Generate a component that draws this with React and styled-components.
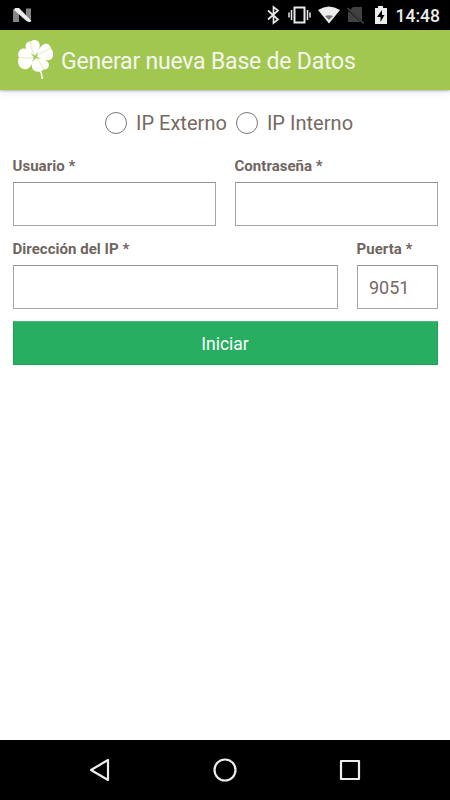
import React from "react";
import styled, { createGlobalStyle } from "styled-components";

const GlobalStyle = createGlobalStyle`
  * { box-sizing: border-box; }
  body { margin: 0; background: #fff; font-family: Roboto, "Liberation Sans", sans-serif; }
`;

const Screen = styled.div`
  display: flex;
  flex-direction: column;
  width: 450px;
  height: 800px;
  background: #fff;
`;

const StatusBar = styled.header`
  display: flex;
  align-items: center;
  justify-content: space-between;
  height: 30px;
  padding: 0 10px 0 13px;
  background: #000;
`;

const StatusIcons = styled.div`
  display: flex;
  align-items: center;
`;

const Clock = styled.span`
  margin: 2px 0 0 8px;
  color: #ebebeb;
  font-size: 17.5px;
  font-weight: 500;
  line-height: 30px;
`;

const AppBar = styled.div`
  display: flex;
  align-items: center;
  height: 60px;
  padding-left: 17px;
  background: #a2c751;
  box-shadow: 0 1px 2px rgba(0, 0, 0, 0.25), 0 3px 7px rgba(0, 0, 0, 0.08);
`;

const Title = styled.h1`
  margin: 4px 0 0 7px;
  color: #f4f6ef;
  font-size: 23px;
  font-weight: 400;
  letter-spacing: -0.2px;
  line-height: 30px;
  white-space: nowrap;
`;

const Form = styled.main`
  flex: 1;
  display: flex;
  flex-direction: column;
  padding: 19px 12.5px 0;
`;

const RadioGroup = styled.div`
  display: flex;
  justify-content: center;
  gap: 9px;
  height: 27px;
  margin-left: 8px;
`;

const Radio = styled.label`
  display: flex;
  align-items: center;
  gap: 9px;
  color: #746962;
  font-size: 20px;
  letter-spacing: 0.03px;
  line-height: 27px;
  white-space: nowrap;
`;

const RadioText = styled.span`
  padding-top: 2px;
`;

const RadioCircle = styled.span`
  width: 22px;
  height: 22px;
  border: 1px solid #7b7775;
  border-radius: 50%;
`;

const FieldRow = styled.div`
  display: grid;
  grid-template-columns: ${(p) => p.$columns};
  column-gap: 19px;
  margin-top: ${(p) => p.$top}px;
`;

const Field = styled.label`
  display: flex;
  flex-direction: column;
  min-width: 0;
`;

const Label = styled.span`
  height: 20px;
  margin-bottom: 6px;
  color: #70655f;
  font-size: 15px;
  font-weight: 700;
  letter-spacing: 0.03px;
  line-height: 20px;
  white-space: nowrap;
`;

const Input = styled.input`
  width: 100%;
  height: 44px;
  padding: 1px 0 0 11.5px;
  border: 1px solid #aaa5a5;
  border-top-color: #969191;
  border-radius: 0;
  background: #fff;
  color: #746962;
  font: 400 18px Roboto, sans-serif;
  outline: none;
`;

const SubmitButton = styled.button`
  height: 44px;
  margin-top: 12px;
  padding: 2px 0 0;
  border: 1px solid #18a452;
  border-top-color: #52b77b;
  background: #28ae61;
  color: #fff;
  font: 400 17.5px Roboto, sans-serif;
`;

const NavBar = styled.nav`
  display: flex;
  justify-content: center;
  align-items: center;
  gap: 97px;
  height: 60px;
  background: #000;
`;

function Clover() {
  return (
    <svg width="37" height="42" viewBox="17 39 37 42" fill="#fff">
      <path d="M34.800 56C29 54 25 50 25.500 45.500C26 42.500 28.500 41.200 30.500 41.500C33 39 38 39.500 39 42.500C41 46 39 51 34.800 56Z" />
      <path d="M36 56.500C37 52 40 46 44 44.200C47.500 43 50.500 45 50.800 48.500C53.500 51 53.800 55 52 58.500C49.500 61.500 42 60.500 36 56.500Z" />
      <path d="M35.800 57.300C42 58.500 48.500 60.500 49 64.500C49.200 68 46 70 43.500 69.500C41 72.500 35.500 72.500 33 69.500C30.500 66 32.500 61 35.800 57.300Z" />
      <path d="M34.800 57C33.500 62 31 67.500 27 69C23 70 19 67.500 18.500 63.500C17.500 61.500 18.200 59 19 57.500C17.200 54.500 18.500 50 22 48.700C27 47.500 32 52 34.800 57Z" />
      <path d="M38.500 69Q42.300 73 42.200 79" fill="none" stroke="#fff" strokeWidth="1.6" />
      <path d="M30.500 42Q30.500 49 34.800 55.500M50 48.500Q43 52 36.600 56M43.500 69Q41 63 36 57.800M19 57.500Q27 59 34.400 57.300" fill="none" stroke="#a2c751" strokeWidth=".35" />
      <path d="M30.500 53L35 55.700L38.500 52L36.600 56.500L41 59.300L36 58L32 62L34 57.500Z" fill="#a2c751" />
    </svg>
  );
}

function NougatIcon() {
  return (
    <svg width="20" height="16" viewBox="13 7 20 16">
      <path d="M13 9l6 4v9h-6zM26 8.500h5v13l-5-4z" fill="#858585" />
      <path d="M15 8h4l12.500 13q-2 2-5 0L14 10z" fill="#ededed" />
    </svg>
  );
}

function SystemIcons() {
  return (
    <svg width="122" height="24" viewBox="266 3 122 24" fill="none" stroke="#e8e8e8">
      <path d="M268 10.500l10 9-4.500 3.500V7l4.500 3.500-10 9" strokeWidth="1.7" />
      <path d="M294.500 7.500h10v15h-10z" strokeWidth="2" />
      <path d="M291.500 10v10M289 12.500v5M307.500 10v10M310 12.500v5" strokeWidth="1.5" />
      <path d="M318 10q11-7 22 0L329 23.500z" fill="#ededed" stroke="none" />
      <path d="M325 16q4-1.500 8 0l-4 4z" fill="#777" stroke="none" />
      <path d="M348 12l5-5h9v15h-14z" fill="#414141" stroke="none" />
      <path d="M348 9l16 15" stroke="#000" strokeWidth="2" />
      <path d="M347.500 8l16 15.500" stroke="#4b4b4b" strokeWidth="1.3" />
      <path d="M375 8h3V6h5v2h4v16h-12z" fill="#ededed" stroke="none" />
      <path d="M382 10l-5 7h3.500v5l4-7H382z" fill="#000" stroke="none" />
    </svg>
  );
}

const NavIcon = styled.svg`
  width: 28px;
  height: 28px;
  fill: none;
  stroke: #ededed;
  stroke-width: 2.2;
  stroke-linejoin: round;
`;

function RadioOption({ children }) {
  return <Radio><RadioCircle /><RadioText>{children}</RadioText></Radio>;
}

function TextField({ label, value = "" }) {
  return (
    <Field>
      <Label>{label}</Label>
      <Input defaultValue={value} />
    </Field>
  );
}

export default function App() {
  return (
    <>
      <GlobalStyle />
      <Screen>
        <StatusBar>
          <NougatIcon />
          <StatusIcons>
            <SystemIcons />
            <Clock>14:48</Clock>
          </StatusIcons>
        </StatusBar>
        <AppBar>
          <Clover />
          <Title>Generar nueva Base de Datos</Title>
        </AppBar>
        <Form>
          <RadioGroup>
            <RadioOption>IP Externo</RadioOption>
            <RadioOption>IP Interno</RadioOption>
          </RadioGroup>
          <FieldRow $columns="1fr 1fr" $top={20}>
            <TextField label="Usuario *" />
            <TextField label="Contraseña *" />
          </FieldRow>
          <FieldRow $columns="1fr 81px" $top={13}>
            <TextField label="Dirección del IP *" />
            <TextField label="Puerta *" value="9051" />
          </FieldRow>
          <SubmitButton>Iniciar</SubmitButton>
        </Form>
        <NavBar>
          <NavIcon viewBox="0 0 28 28"><path d="M5 14L22 4v20z" /></NavIcon>
          <NavIcon viewBox="0 0 28 28"><circle cx="14" cy="14" r="10.500" /></NavIcon>
          <NavIcon viewBox="0 0 28 28"><path d="M5 5h18v18H5z" /></NavIcon>
        </NavBar>
      </Screen>
    </>
  );
}
